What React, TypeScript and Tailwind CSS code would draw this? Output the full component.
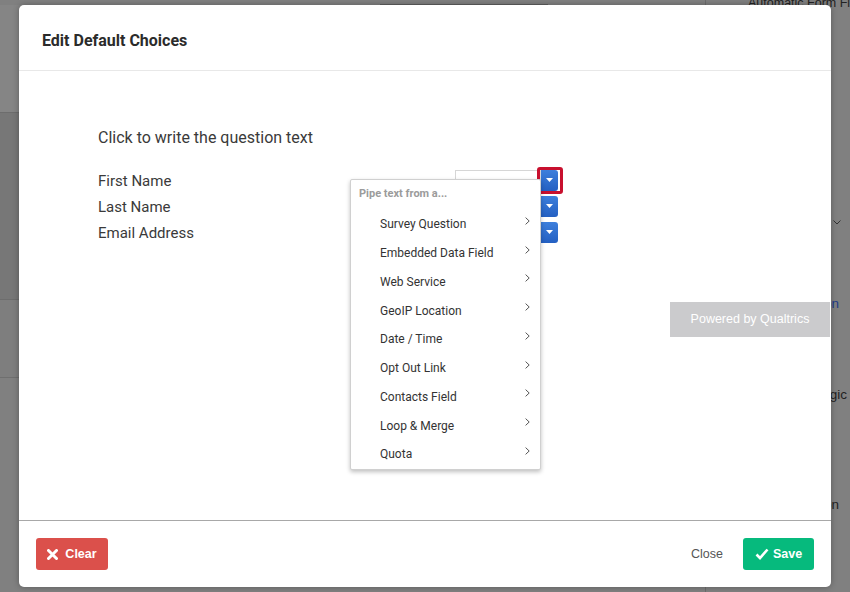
import React from "react";

const menuItems = [
  "Survey Question",
  "Embedded Data Field",
  "Web Service",
  "GeoIP Location",
  "Date / Time",
  "Opt Out Link",
  "Contacts Field",
  "Loop & Merge",
  "Quota",
];

const choices = ["First Name", "Last Name", "Email Address"];

function Chevron() {
  return (
    <svg width="5" height="8" viewBox="0 0 5 8" fill="none" className="mt-[-7px]">
      <polyline points="0.6,0.6 4.2,4 0.6,7.4" stroke="#555" strokeWidth="1" />
    </svg>
  );
}

function Caret() {
  return (
    <svg width="7" height="4" viewBox="0 0 7 4">
      <polygon points="0,0 7,0 3.5,4" fill="#fff" />
    </svg>
  );
}

function ChoiceRow({ label, first }: { label: string; first?: boolean }) {
  return (
    <div className="flex items-center h-[26px]">
      <div className="w-[357px] pt-[2px] text-[15px] text-[#3a3a3a]">{label}</div>
      <div className="w-[86px] h-[21px] border border-[#d6d6d6] bg-white" />
      <div className="relative w-[17px] h-[21px] rounded-r-[3px] bg-gradient-to-b from-[#3d7fdc] to-[#2460c2] flex items-center justify-center">
        <Caret />
        {first && (
          <div className="absolute left-[-4px] top-[-3px] w-[26px] h-[27px] border-[3px] border-[#c8102e] rounded-[3px]" />
        )}
      </div>
    </div>
  );
}

function PipeMenu() {
  return (
    <div className="absolute left-[331px] top-[108px] w-[191px] h-[291px] bg-white border border-[#d0d0d0] rounded-[2px] shadow-[0_2px_4px_rgba(0,0,0,0.25)] pt-[6px]">
      <div className="pl-[8px] text-[11px] font-bold text-[#9b9b9b] leading-[16px]">Pipe text from a...</div>
      <div className="mt-[8px] flex flex-col">
        {menuItems.map((item) => (
          <div key={item} className="h-[28.75px] flex items-center justify-between pl-[29px] pr-[10px] text-[12px] text-[#333] leading-[14px]">
            <span>{item}</span>
            <Chevron />
          </div>
        ))}
      </div>
    </div>
  );
}

function XIcon() {
  return (
    <svg width="11" height="11" viewBox="0 0 11 11">
      <path d="M1.5 1.5 L9.5 9.5 M9.5 1.5 L1.5 9.5" stroke="#fff" strokeWidth="3" strokeLinecap="round" />
    </svg>
  );
}

function CheckIcon() {
  return (
    <svg width="14" height="12" viewBox="0 0 14 12">
      <path d="M1.5 6.5 L5 10 L12.5 1.5" stroke="#fff" strokeWidth="2.6" fill="none" strokeLinejoin="miter" />
    </svg>
  );
}

function Backdrop() {
  return (
    <div className="absolute inset-0 flex bg-[#808080]">
      <div className="w-[705px] shrink-0 flex flex-col">
        <div className="h-[5px] flex">
          <div className="w-[380px]" />
          <div className="w-[168px] border-b border-[#5f5f5f]" />
        </div>
        <div className="h-[107px] bg-[#858585]" />
        <div className="h-[188px] bg-[#777] border-y border-[#6d6d6d]" />
        <div className="h-[78px] bg-[#7e7e7e] border-b border-[#6f6f6f]" />
        <div className="flex-1" />
      </div>
      <div className="flex-1 min-w-0 overflow-hidden border-l border-[#6d6d6d] pl-[42px] flex flex-col text-[13.5px] text-[#222] font-['Liberation_Sans',sans-serif] whitespace-nowrap">
        <div className="mt-[-4px] leading-[14px] text-[12.5px]">Automatic Form Fields</div>
        <div className="mt-[210px] flex justify-end pr-[9px]">
          <svg width="8" height="5" viewBox="0 0 8 5">
            <polyline points="0.5,0.5 4,4 7.5,0.5" stroke="#333" strokeWidth="1" fill="none" />
          </svg>
        </div>
        <div className="mt-[71px] w-[91px] text-right text-[#1f3c88] leading-[16px]">Add Validation</div>
        <div className="mt-[75px] w-[99px] text-right leading-[16px]">Display Logic</div>
        <div className="mt-[94px] w-[91px] text-right leading-[16px]">Add Question</div>
      </div>
    </div>
  );
}

export default function App() {
  return (
    <div className="relative w-[850px] h-[592px] overflow-hidden font-['Roboto',sans-serif]">
      <Backdrop />

      <div className="absolute left-[19px] top-[5px] w-[812px] h-[582px] bg-white rounded-[5px] shadow-[0_0_6px_rgba(0,0,0,0.3)] flex flex-col">
        <div className="h-[66px] border-b border-[#e8e8e8] flex items-center pl-[23px] pt-[6px]">
          <h2 className="text-[16px] font-bold text-[#2b2b2b]">Edit Default Choices</h2>
        </div>

        <div className="relative flex-1 pl-[79px] pt-[56px]">
          <p className="text-[16px] text-[#3a3a3a] leading-[22px]">Click to write the question text</p>
          <div className="mt-[18px] flex flex-col">
            {choices.map((c, i) => (
              <ChoiceRow key={c} label={c} first={i === 0} />
            ))}
          </div>

          <PipeMenu />

          <div className="absolute right-[1px] top-[231px] w-[160px] h-[35px] bg-[#cbcbcd] flex items-center justify-center text-[12.5px] text-white font-['Liberation_Sans',sans-serif]">
            Powered by Qualtrics
          </div>
        </div>

        <div className="h-[67px] border-t-[1.5px] border-[#a8a8a8] flex items-start justify-between px-[17px] pt-[17px] font-['Liberation_Sans',sans-serif]">
          <button className="w-[72px] h-[32px] rounded-[3px] bg-[#db504b] text-white text-[12.5px] font-bold flex items-center justify-center gap-[7px]">
            <XIcon />
            <span>Clear</span>
          </button>
          <div className="flex items-center gap-[20px]">
            <span className="text-[12.5px] text-[#555] pl-[1px]">Close</span>
            <button className="w-[71px] h-[32px] rounded-[3px] bg-[#06ba7d] text-white text-[12.5px] font-bold flex items-center justify-center gap-[4px]">
              <CheckIcon />
              <span>Save</span>
            </button>
          </div>
        </div>
      </div>
    </div>
  );
}
